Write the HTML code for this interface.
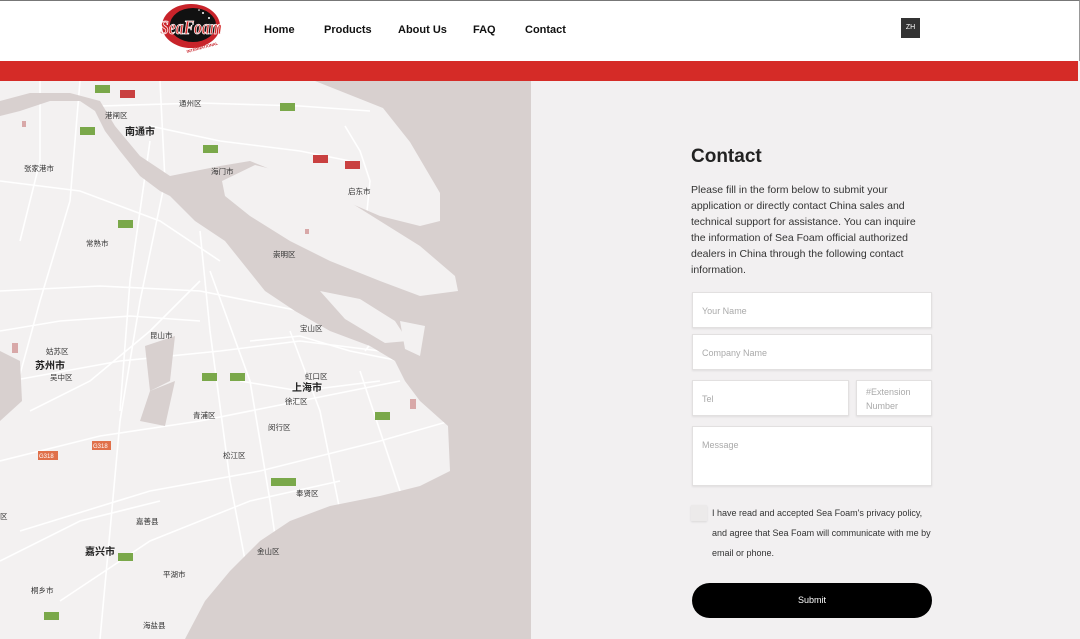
<!DOCTYPE html>
<html><head><meta charset="utf-8"><style>
*{margin:0;padding:0;box-sizing:border-box}
body{width:1080px;height:639px;overflow:hidden;font-family:"Liberation Sans","Noto Sans CJK SC",sans-serif;background:#f2f0f1;position:relative}
.hdr{position:absolute;left:0;top:0;width:1080px;height:61px;background:#fff;border-top:1px solid #777;border-right:1px solid #999}
.red{position:absolute;left:0;top:61px;width:1078px;height:20px;background:#d52b27}
.nav{position:absolute;top:24px;font-size:11px;font-weight:bold;color:#111}
.zh{position:absolute;left:901px;top:18px;width:19px;height:20px;background:#333;color:#fff;font-size:7px;text-align:center;line-height:20px}
.map{position:absolute;left:0;top:81px;width:531px;height:558px;background:#f3f1f1;overflow:hidden}
.right{position:absolute;left:531px;top:81px;width:548px;height:558px;background:#f2f0f1}
h2{position:absolute;left:691px;top:146px;font-size:19px;font-weight:bold;color:#222}
.p{position:absolute;left:691px;top:182px;width:230px;font-size:10.5px;line-height:16px;color:#333}
.in{position:absolute;background:#fff;border:1px solid #e2e0e0;box-shadow:0 1px 2px rgba(0,0,0,.08);font-size:9px;color:#aaa;padding:0 9px}
.cb{position:absolute;left:691px;top:505px;width:16px;height:16px;background:#eceaea;box-shadow:0 1px 2px rgba(0,0,0,.1)}
.ag{position:absolute;left:712px;top:503px;width:225px;font-size:9px;line-height:20px;color:#333}
.btn{position:absolute;left:692px;top:583px;width:240px;height:35px;border-radius:18px;background:#000;color:#fff;font-size:9px;text-align:center;line-height:35px}
.lb{font-size:7.5px;fill:#333}
.lb2{font-size:10px;fill:#222;font-weight:bold}
</style></head><body>
<div class="hdr"></div>
<svg style="position:absolute;left:155px;top:1px" width="75" height="56" viewBox="0 0 75 56">
<ellipse cx="36" cy="25" rx="29" ry="22" fill="#c8232a"/>
<ellipse cx="38" cy="24" rx="23" ry="17" fill="#111"/>
<circle cx="48" cy="12" r="1" fill="#fff"/><circle cx="54" cy="17" r="1" fill="#fff"/><circle cx="44" cy="9" r="0.8" fill="#fff"/>
<text x="5" y="33" font-family="Liberation Serif" font-style="italic" font-weight="bold" font-size="20" textLength="62" lengthAdjust="spacingAndGlyphs" fill="#d42a2a" stroke="#fff" stroke-width="0.8">SeaFoam</text>
<text x="32" y="52" font-size="4" fill="#c8232a" font-weight="bold" transform="rotate(-15 32 52)">INTERNATIONAL</text>
</svg>
<div class="nav" style="left:264px">Home</div>
<div class="nav" style="left:324px">Products</div>
<div class="nav" style="left:398px">About Us</div>
<div class="nav" style="left:473px">FAQ</div>
<div class="nav" style="left:525px">Contact</div>
<div class="zh">ZH</div>
<div class="red"></div>
<div class="map">
<svg width="531" height="558" viewBox="0 0 531 558">
<g fill="none" stroke="#fff" stroke-width="1.6">
<path d="M0 100 L80 110 L160 140 L220 180"/><path d="M0 210 L100 205 L200 210 L300 230 L360 250"/>
<path d="M10 300 L120 280 L220 270 L300 260 L380 270 L460 300"/><path d="M0 380 L100 355 L200 340 L300 320 L400 300"/>
<path d="M20 450 L150 410 L260 390 L380 360 L450 340"/><path d="M60 520 L150 460 L250 420 L340 400"/>
<path d="M80 0 L70 120 L40 220 L10 330"/><path d="M160 0 L165 100 L140 220 L120 340 L110 450 L100 558"/>
<path d="M150 60 L130 200 L120 330"/><path d="M200 150 L210 250 L230 400 L260 558"/>
<path d="M210 190 L250 300 L270 420 L290 558"/><path d="M290 250 L320 330 L340 430"/>
<path d="M360 290 L380 350 L410 440 L450 480 L460 520 L480 540"/>
<path d="M345 45 L360 70 L370 100 L365 150 L400 180 L410 190 L380 250 L365 270"/>
<path d="M150 45 L220 60 L300 70 L350 80"/><path d="M100 25 L200 22 L300 25 L370 30"/>
<path d="M0 250 L60 240 L130 235 L200 240"/><path d="M30 330 L90 300 L150 250 L200 200"/>
<path d="M250 260 L300 255 L350 270 L400 280"/><path d="M240 300 L300 310 L380 300"/>
<path d="M0 480 L80 440 L160 420"/><path d="M40 0 L40 80 L20 160"/>
</g>
<path fill="#d8d0cf" d="M315 0 L531 0 L531 558 L185 558 L205 520 L230 490 L260 460 L290 440 L330 425 L380 415 L420 405 L450 390 L448 345 L420 320 L405 300 L395 280 L370 265 L330 250 L295 230 L265 210 L245 185 L225 160 L195 140 L170 115 L160 110 L140 95 L120 70 L105 50 L95 30 L80 20 L50 20 L20 30 L0 35 L0 20 L30 12 L70 12 L100 20 L115 45 L140 75 L170 95 L220 85 L250 80 L300 100 L345 120 L380 135 L420 145 L440 140 L440 112 L410 61 L383 27 Z"/>
<path fill="#f3f1f1" d="M222 100 L255 84 L300 95 L340 115 L380 140 L420 165 L455 195 L458 210 L420 215 L380 200 L330 180 L290 160 L250 135 L225 115 Z"/>
<path fill="#f3f1f1" d="M320 210 L360 218 L395 240 L408 260 L385 262 L345 238 Z"/>
<path fill="#f3f1f1" d="M400 240 L425 245 L420 275 L405 268 Z"/>
<path fill="#d8d0cf" d="M0 270 L20 280 L22 320 L0 340 Z"/>
<path fill="#d8d0cf" d="M145 265 L175 255 L170 300 L150 310 Z"/>
<path fill="#d8d0cf" d="M150 310 L175 300 L165 345 L140 340 Z"/>
<g fill="#d8a8a8"><rect x="12" y="262" width="6" height="10"/><rect x="22" y="40" width="4" height="6"/><rect x="305" y="148" width="4" height="5"/><rect x="410" y="318" width="6" height="10"/></g>
</svg>
</div>
<svg style="position:absolute;left:0;top:81px" width="531" height="558">
<g font-family="Liberation Sans,Noto Sans CJK SC,sans-serif">
<text class="lb" x="179" y="25">通州区</text><text class="lb" x="105" y="37">港闸区</text>
<text class="lb2" x="125" y="54">南通市</text><text class="lb" x="24" y="90">张家港市</text>
<text class="lb" x="211" y="93">海门市</text><text class="lb" x="348" y="113">启东市</text>
<text class="lb" x="86" y="165">常熟市</text><text class="lb" x="273" y="176">崇明区</text>
<text class="lb" x="300" y="250">宝山区</text><text class="lb" x="150" y="257">昆山市</text>
<text class="lb" x="46" y="273">姑苏区</text><text class="lb2" x="35" y="288">苏州市</text>
<text class="lb" x="50" y="299">吴中区</text><text class="lb" x="305" y="298">虹口区</text>
<text class="lb2" x="292" y="310">上海市</text><text class="lb" x="285" y="323">徐汇区</text>
<text class="lb" x="193" y="337">青浦区</text><text class="lb" x="268" y="349">闵行区</text>
<text class="lb" x="223" y="377">松江区</text><text class="lb" x="296" y="415">奉贤区</text>
<text class="lb" x="136" y="443">嘉善县</text><text class="lb2" x="85" y="474">嘉兴市</text>
<text class="lb" x="257" y="473">金山区</text><text class="lb" x="163" y="496">平湖市</text>
<text class="lb" x="31" y="512">桐乡市</text><text class="lb" x="143" y="547">海盐县</text>
<text class="lb" x="0" y="438">区</text>
</g>
<g font-size="6" fill="#fff" font-family="Liberation Sans">
<rect x="95" y="4" width="15" height="8" fill="#7aa84a"/><rect x="120" y="9" width="15" height="8" fill="#c94040"/>
<rect x="80" y="46" width="15" height="8" fill="#7aa84a"/><rect x="280" y="22" width="15" height="8" fill="#7aa84a"/>
<rect x="203" y="64" width="15" height="8" fill="#7aa84a"/><rect x="313" y="74" width="15" height="8" fill="#c94040"/>
<rect x="345" y="80" width="15" height="8" fill="#c94040"/><rect x="118" y="139" width="15" height="8" fill="#7aa84a"/>
<rect x="202" y="292" width="15" height="8" fill="#7aa84a"/><rect x="230" y="292" width="15" height="8" fill="#7aa84a"/>
<rect x="375" y="331" width="15" height="8" fill="#7aa84a"/><rect x="92" y="360" width="19" height="9" fill="#e0704a"/>
<rect x="38" y="370" width="20" height="9" fill="#e0704a"/><rect x="271" y="397" width="25" height="8" fill="#7aa84a"/>
<rect x="118" y="472" width="15" height="8" fill="#7aa84a"/><rect x="44" y="531" width="15" height="8" fill="#7aa84a"/>
<text x="39" y="377">G318</text><text x="93" y="367">G318</text>
</g>
</svg>
<div class="right"></div>
<h2>Contact</h2>
<div class="p">Please fill in the form below to submit your application or directly contact China sales and technical support for assistance. You can inquire the information of Sea Foam official authorized dealers in China through the following contact information.</div>
<div class="in" style="left:692px;top:292px;width:240px;height:36px;line-height:36px">Your Name</div>
<div class="in" style="left:692px;top:334px;width:240px;height:36px;line-height:36px">Company Name</div>
<div class="in" style="left:692px;top:380px;width:157px;height:36px;line-height:36px">Tel</div>
<div class="in" style="left:856px;top:380px;width:76px;height:36px;line-height:14px;padding-top:4px">#Extension Number</div>
<div class="in" style="left:692px;top:426px;width:240px;height:60px;line-height:14px;padding-top:11px">Message</div>
<div class="cb"></div>
<div class="ag">I have read and accepted Sea Foam's privacy policy, and agree that Sea Foam will communicate with me by email or phone.</div>
<div class="btn">Submit</div>
</body></html>
